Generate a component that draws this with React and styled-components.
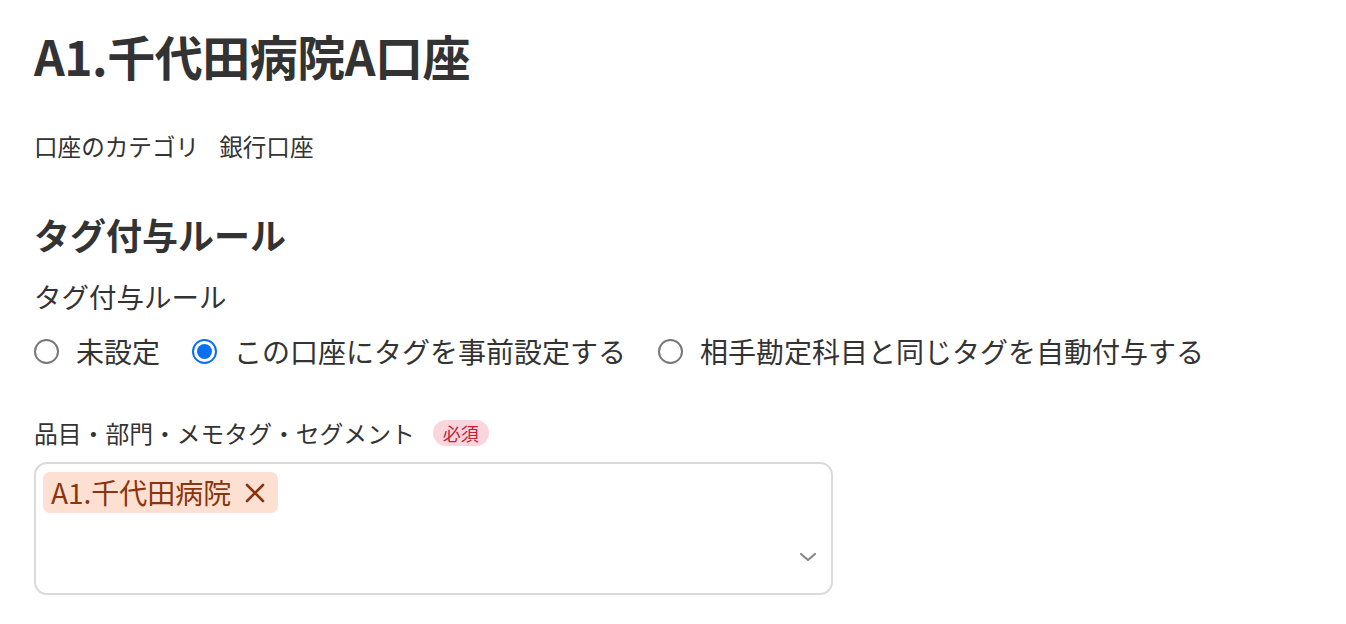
import React, { useState } from "react";
import styled, { createGlobalStyle } from "styled-components";

const Global = createGlobalStyle`
  html, body { margin: 0; padding: 0; background: #fff; }
  body {
    font-family: "Hiragino Sans", "Noto Sans CJK JP", "Noto Sans", sans-serif;
    color: #333;
  }
  * { box-sizing: border-box; }
`;

const Page = styled.div`
  padding: 19px 34px 0;
`;

const Title = styled.h1`
  margin: 0;
  font-size: 48px;
  line-height: 72px;
  font-weight: 700;
  letter-spacing: -0.5px;
`;

const InfoRow = styled.div`
  margin-top: 37px;
  display: flex;
  gap: 20px;
  font-size: 23.6px;
  line-height: 36px;
`;

const Heading = styled.h2`
  margin: 43px 0 0;
  font-size: 36px;
  line-height: 54px;
  font-weight: 700;
`;

const SubLabel = styled.div`
  margin-top: 15px;
  font-size: 27.5px;
  line-height: 40px;
`;

const RadioRow = styled.div`
  margin-top: 15px;
  display: flex;
  align-items: center;
  gap: 32px;
  height: 40px;
`;

const RadioItem = styled.label`
  display: flex;
  align-items: center;
  gap: 17px;
  font-size: 28px;
  line-height: 40px;
  cursor: pointer;
`;

const Circle = styled.span`
  width: 25px;
  height: 25px;
  border-radius: 50%;
  border: 2px solid ${(p) => (p.$checked ? "#0b6ff2" : "#777")};
  display: flex;
  align-items: center;
  justify-content: center;
  flex: none;
  &::after {
    content: "";
    width: 15px;
    height: 15px;
    border-radius: 50%;
    background: #0b6ff2;
    display: ${(p) => (p.$checked ? "block" : "none")};
  }
`;

const FieldLabel = styled.div`
  margin-top: 44px;
  display: flex;
  align-items: center;
  gap: 18px;
  font-size: 23.8px;
  line-height: 36px;
`;

const Badge = styled.span`
  display: inline-flex;
  align-items: center;
  height: 26px;
  padding: 0 10px;
  border-radius: 13px;
  background: #fad6dc;
  color: #c0203a;
  font-size: 18px;
  line-height: 26px;
`;

const SelectBox = styled.div`
  margin-top: 11px;
  width: 799px;
  height: 133px;
  border: 2px solid #dadada;
  border-radius: 13px;
  display: flex;
`;

const TagArea = styled.div`
  flex: 1;
  padding: 8px 7px;
  display: flex;
  flex-wrap: wrap;
  align-content: flex-start;
  gap: 8px;
`;

const Chip = styled.span`
  display: inline-flex;
  align-items: center;
  height: 41px;
  padding: 0 12px 0 8px;
  gap: 13px;
  border-radius: 7px;
  background: #fde0d1;
  color: #8a3410;
  font-size: 28px;
  line-height: 41px;
`;

const ChipClose = styled.span`
  display: inline-flex;
  align-items: center;
  justify-content: center;
  width: 22px;
  height: 22px;
`;

const Indicator = styled.div`
  display: flex;
  align-items: flex-end;
  padding: 0 14px 30px 0;
  color: #888;
`;

export default function App() {
  const [value, setValue] = useState(1);
  const options = ["未設定", "この口座にタグを事前設定する", "相手勘定科目と同じタグを自動付与する"];
  return (
    <Page>
      <Global />
      <Title>A1.千代田病院A口座</Title>
      <InfoRow>
        <span>口座のカテゴリ</span>
        <span>銀行口座</span>
      </InfoRow>
      <Heading>タグ付与ルール</Heading>
      <SubLabel>タグ付与ルール</SubLabel>
      <RadioRow>
        {options.map((o, i) => (
          <RadioItem key={o} onClick={() => setValue(i)}>
            <Circle $checked={value === i} />
            <span>{o}</span>
          </RadioItem>
        ))}
      </RadioRow>
      <FieldLabel>
        <span>品目・部門・メモタグ・セグメント</span>
        <Badge>必須</Badge>
      </FieldLabel>
      <SelectBox>
        <TagArea>
          <Chip>
            <span>A1.千代田病院</span>
            <ChipClose>
              <svg width="20" height="20" viewBox="0 0 20 20" fill="none" stroke="currentColor" strokeWidth="2.6" strokeLinecap="round">
                <path d="M2 2 L18 18 M18 2 L2 18" />
              </svg>
            </ChipClose>
          </Chip>
        </TagArea>
        <Indicator>
          <svg width="18" height="12" viewBox="0 0 18 12" fill="none" stroke="currentColor" strokeWidth="2.2" strokeLinecap="round" strokeLinejoin="round">
            <path d="M2 3 L9 9 L16 3" />
          </svg>
        </Indicator>
      </SelectBox>
    </Page>
  );
}
